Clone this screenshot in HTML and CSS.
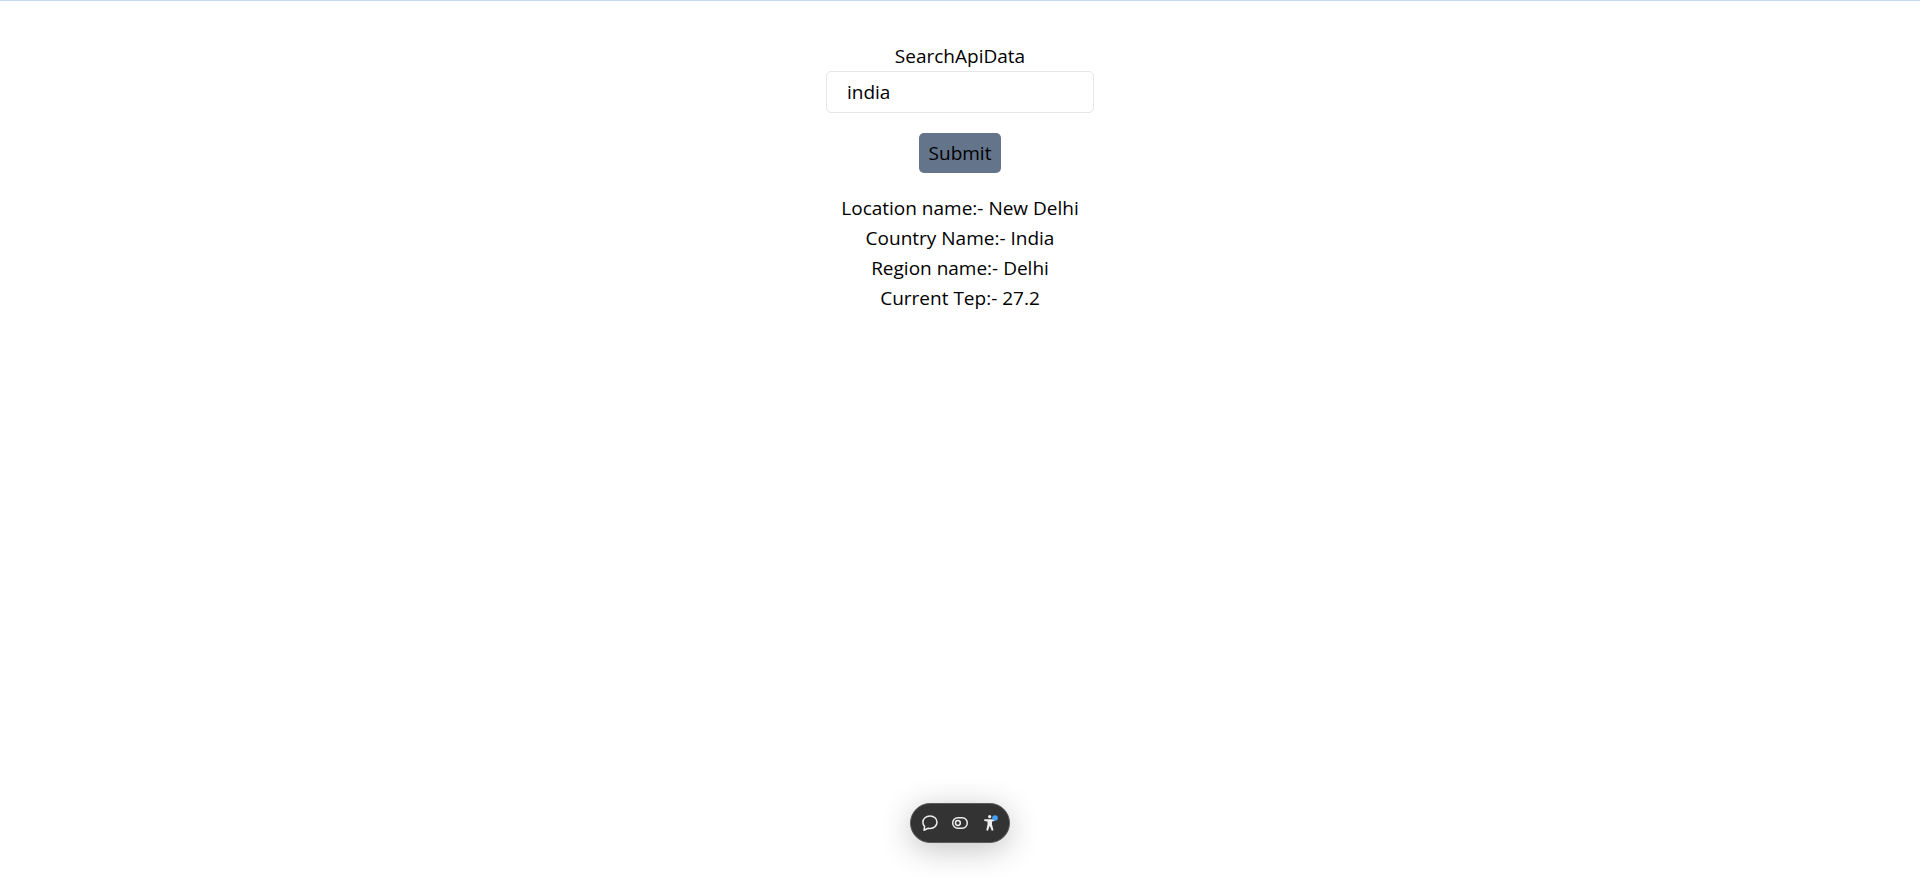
FILE: index.html
```html
<!DOCTYPE html>
<html lang="en">
<head>
<meta charset="utf-8">
<meta name="viewport" content="width=device-width, initial-scale=1">
<title>Search</title>
<link rel="stylesheet" href="styles.css">
</head>
<body>
<main class="page">
  <form class="search" onsubmit="return false">
    <label class="search-label" for="query">SearchApiData</label>
    <input class="search-input" id="query" type="text" value="india">
    <button class="search-submit" type="submit">Submit</button>
  </form>
  <section class="results">
    <p>Location name:- New Delhi</p>
    <p>Country Name:- India</p>
    <p>Region name:- Delhi</p>
    <p>Current Tep:- 27.2</p>
  </section>
</main>
<div class="toolbar" role="toolbar" aria-label="Page tools">
  <button class="tool" type="button" aria-label="Comment">
    <svg viewBox="0 0 20 20" width="20" height="20" fill="none" stroke="currentColor" stroke-width="1.5" stroke-linejoin="round"><path d="M10 3C14 3 17 5.600 17 9.200C17 12.800 14 15.400 10.200 15.400C9.500 15.400 8.800 15.300 8.200 15.200L4 17.200L4.600 13.600C3.500 12.400 2.900 10.900 2.900 9.200C2.900 5.600 6 3 10 3Z"/></svg>
  </button>
  <button class="tool" type="button" aria-label="Feature flags">
    <svg viewBox="0 0 20 20" width="20" height="20" fill="none" stroke="currentColor" stroke-width="1.5"><rect x="2.750" y="4.750" width="14.500" height="10.500" rx="5"/><circle cx="7.900" cy="10" r="2.400"/></svg>
  </button>
  <button class="tool" type="button" aria-label="Accessibility">
    <svg viewBox="0 0 20 20" width="20" height="20" fill="currentColor"><circle cx="9.700" cy="3.700" r="1.600"/><path d="M4.300 6.200H14.500V7.900L12 8.400V11.500L13.500 17.200L11.800 17.700L9.900 13.200H9.500L8 17.700L6.300 17.200L7.500 11.500V8.400L4.300 7.900Z"/><circle class="tool-dot" cx="15" cy="5" r="2.800"/></svg>
  </button>
</div>
</body>
</html>
```
FILE: styles.css
```css
* {
  box-sizing: border-box;
}

body {
  margin: 0;
  background: #fff;
  color: #000;
  font-family: "Segoe UI", "Open Sans", "Noto Sans", sans-serif;
  font-size: 19px;
  line-height: 30px;
}

.page {
  padding-top: 40px;
  border-top: 1px solid #c7daf7;
  text-align: center;
}

.search {
  display: flex;
  flex-direction: column;
  align-items: center;
}

.search-input {
  width: 268px;
  height: 42px;
  padding: 5px 20px;
  border: 1px solid #e5e7eb;
  border-radius: 5px;
  background: #fff;
  color: inherit;
  font: inherit;
}

.search-submit {
  margin: 20px 0;
  padding: 5px 10px;
  border: 0;
  border-radius: 5px;
  background: #64748b;
  color: inherit;
  font: inherit;
}

.results p {
  margin: 0;
}

.toolbar {
  position: fixed;
  right: 0;
  bottom: 36px;
  left: 0;
  display: flex;
  align-items: center;
  width: fit-content;
  margin: 0 auto;
  padding: 4px;
  border: 1px solid #5a5a5a;
  border-radius: 20px;
  background: #333;
  box-shadow: 0 6px 32px rgba(0, 0, 0, 0.24);
}

.tool {
  display: flex;
  padding: 5px;
  border: 0;
  background: none;
  color: #eee;
}

.tool-dot {
  fill: #47a3ff;
}
```
